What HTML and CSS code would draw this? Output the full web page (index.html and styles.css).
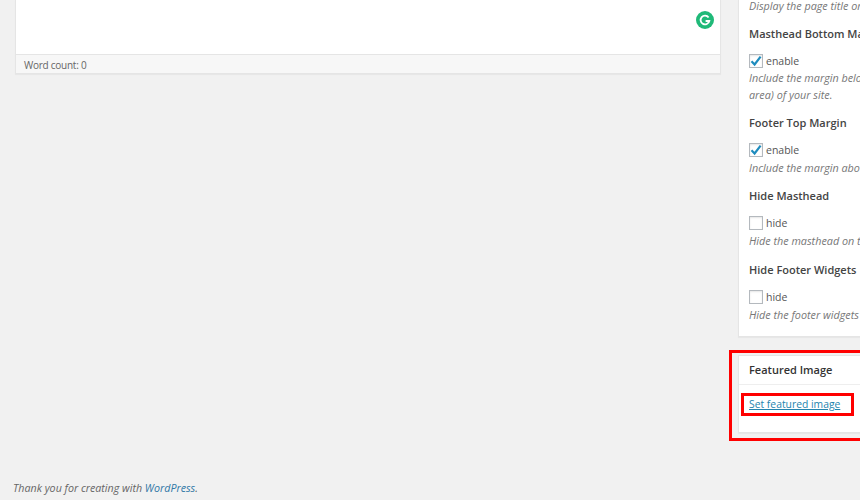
FILE: index.html
```html
<!DOCTYPE html>
<html>
	<head>
		<meta charset="utf-8">
		<title>Edit Post</title>
		<link rel="stylesheet" href="styles.css">
	</head>
	<body>
		<div class="columns">
			<div class="main">
				<div class="editor">
					<div class="editor_area">
						<svg class="grammarly" width="18" height="18" viewBox="0 0 18 18">
							<circle cx="9" cy="9" r="9" fill="#1fb978" />
							<path d="M12.6 6.4A4.4 4.4 0 1 0 13.3 10H9.6" fill="none" stroke="#fff" stroke-width="1.8" />
						</svg>
					</div>
					<div class="status_bar">Word count: 0</div>
				</div>
			</div>

			<div class="side">
				<div class="panel options">
					<p class="hint first">Display the page title on this page</p>

					<h4>Masthead Bottom Margin</h4>
					<label class="check"><span class="box on"><svg width="14" height="14" viewBox="0 0 14 14"><path d="M2.5 7.2 5.6 10.5 11.6 2.6" fill="none" stroke="#1e8cbe" stroke-width="2.2" /></svg></span>enable</label>
					<p class="hint two">Include the margin below the header<br>area) of your site.</p>

					<h4>Footer Top Margin</h4>
					<label class="check"><span class="box on"><svg width="14" height="14" viewBox="0 0 14 14"><path d="M2.5 7.2 5.6 10.5 11.6 2.6" fill="none" stroke="#1e8cbe" stroke-width="2.2" /></svg></span>enable</label>
					<p class="hint">Include the margin above the footer</p>

					<h4>Hide Masthead</h4>
					<label class="check"><span class="box"></span>hide</label>
					<p class="hint">Hide the masthead on this page</p>

					<h4>Hide Footer Widgets</h4>
					<label class="check"><span class="box"></span>hide</label>
					<p class="hint">Hide the footer widgets on this page</p>
				</div>

				<div class="panel featured">
					<h4 class="panel_title">Featured Image</h4>
					<div class="panel_body">
						<a href="#">Set featured image</a>
					</div>
				</div>
			</div>
		</div>

		<p class="footer">Thank you for creating with <a href="#">WordPress</a>.</p>

		<!-- red marks drawn over the screenshot -->
		<div class="mark mark_panel"></div>
		<div class="mark mark_link"></div>
	</body>
</html>
```

FILE: styles.css
```css
* {
	padding:0px;
	margin:0px;
	box-sizing:border-box;
}

html, body {
	height:500px;
	overflow:hidden;
}

body {
	position:relative;
	width:860px;
	background:#f1f1f1;
	color:#444;
	font-family:"Open Sans", "Liberation Sans", sans-serif;
	font-size:11px;
}

a {
	color:#2584ae;
}

.columns {
	display:flex;
	gap:17px;
	height:441px;
	padding-left:15px;
}

.main {
	flex:none;
	width:706px;
}

.editor {
	background:#fff;
	border:1px solid #e5e5e5;
	border-top:0;
	box-shadow:0 1px 1px rgba(0,0,0,.04);
}

.editor_area {
	display:flex;
	justify-content:flex-end;
	align-items:flex-start;
	height:54px;
	padding:11px 6px 0 0;
}

.status_bar {
	height:19px;
	padding-left:8px;
	background:#f7f7f7;
	border-top:1px solid #e5e5e5;
	color:#666;
	font-size:10px;
	letter-spacing:-.25px;
	line-height:20px;
}

.side {
	flex:none;
	width:280px;
}

.panel {
	background:#fff;
	border:1px solid #e5e5e5;
	box-shadow:0 1px 1px rgba(0,0,0,.04);
	white-space:nowrap;
	overflow:hidden;
}

.options {
	height:337px;
	padding:0 10px;
	border-top:0;
}

.options h4 {
	margin-top:10px;
	font-size:11px;
	font-weight:600;
	line-height:20px;
}

.options h4:last-of-type {
	margin-top:11px;
}

.hint {
	color:#777;
	font-size:10.8px;
	font-style:italic;
	line-height:17px;
}

.hint.first {
	margin-top:-3px;
}

.hint.two {
	line-height:16.5px;
}

.check {
	display:flex;
	align-items:center;
	gap:3px;
	height:18px;
	margin-top:8px;
	color:#555;
	font-size:10.5px;
}

.box {
	display:flex;
	align-items:center;
	justify-content:center;
	width:14px;
	height:14px;
	background:#fff;
	border:1px solid #b4b9be;
	box-shadow:inset 0 1px 2px rgba(0,0,0,.1);
}

.box svg {
	flex:none;
}

.featured {
	height:78px;
	margin-top:18px;
}

.panel_title {
	height:29px;
	padding:4px 10px 0;
	border-bottom:1px solid #eee;
	color:#333;
	font-size:11px;
	font-weight:600;
	line-height:20px;
}

.panel_body {
	padding:9px 10px;
	font-size:10.35px;
	line-height:20px;
}

.footer {
	padding:39px 0 0 13px;
	color:#666;
	font-size:10.7px;
	font-style:italic;
	line-height:17px;
}

.footer a {
	color:#2f77a6;
	text-decoration:none;
}

.mark {
	position:absolute;
	border:3px solid #f00;
}

.mark_panel {
	left:729px;
	top:350px;
	width:140px;
	height:91px;
}

.mark_link {
	left:741px;
	top:393px;
	width:113px;
	height:23px;
}
```
